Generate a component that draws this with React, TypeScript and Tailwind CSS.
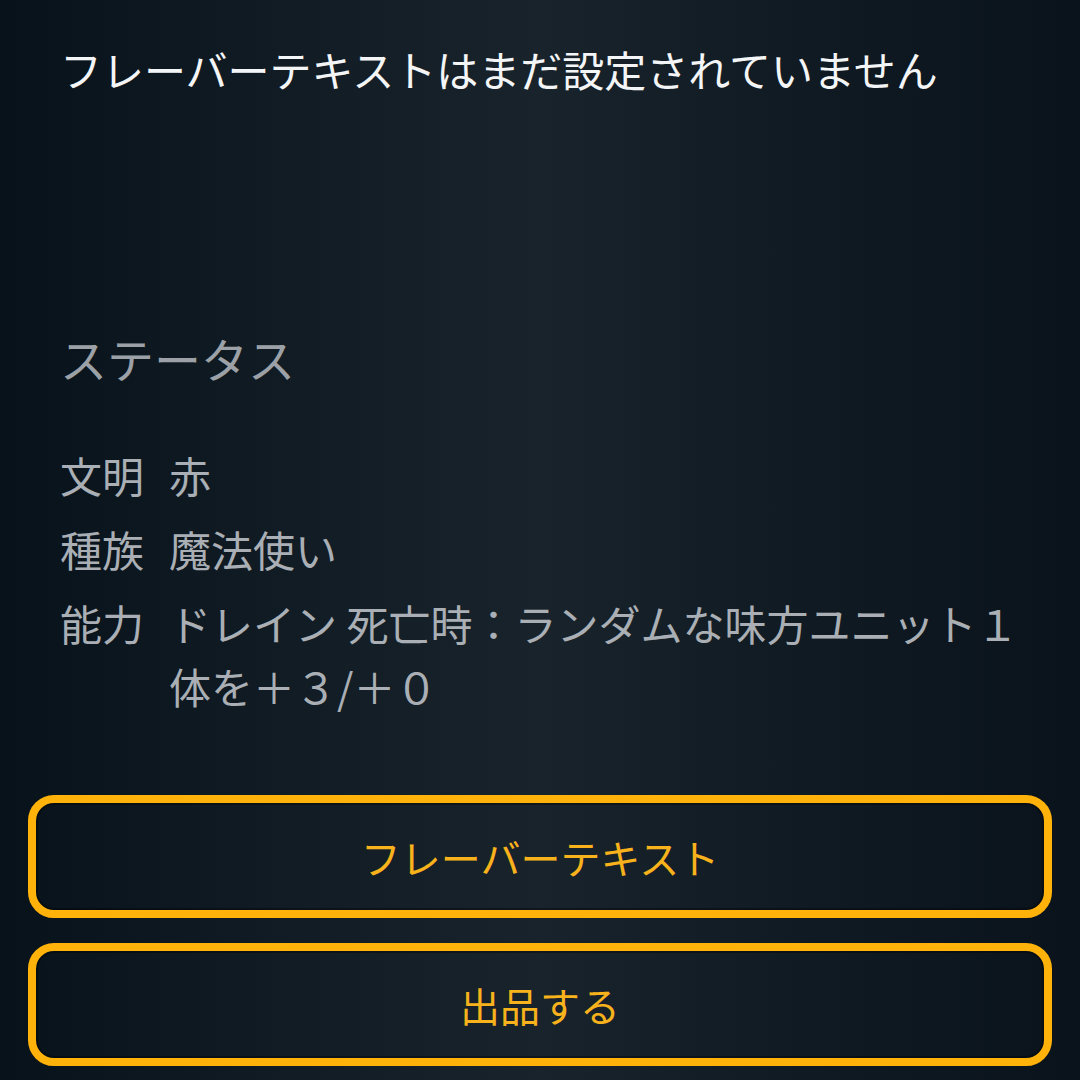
const statusRows = [
  { label: "文明", value: "赤" },
  { label: "種族", value: "魔法使い" },
  { label: "能力", value: "ドレイン 死亡時：ランダムな味方ユニット１体を＋３/＋０" },
];

function OutlineButton({ text }: { text: string }) {
  return (
    <button className="flex h-[123px] w-full items-center justify-center rounded-[26px] border-[8px] border-[#ffb20a] text-[40px] leading-none text-[#f7b21c] shadow-[inset_0_0_0_2px_rgba(0,0,0,0.35)]">
      {text}
    </button>
  );
}

export default function App() {
  return (
    <div
      className="flex h-[1080px] w-[1080px] flex-col overflow-hidden bg-[linear-gradient(90deg,#08121a_0%,#111b24_25%,#19232b_50%,#111b23_72%,#0a131b_100%)]"
      style={{ fontFamily: '"Noto Sans CJK JP", "Noto Sans", sans-serif' }}
    >
      <div className="pl-[60px] pr-[40px]">
        {/* flavor text */}
        <p className="mt-[39px] text-[42px] leading-[60px] text-[#f4f5f6]">
          フレーバーテキストはまだ設定されていません
        </p>

        {/* status */}
        <h2 className="mt-[229px] text-[47px] leading-[60px] text-[#9ba1a6]">ステータス</h2>

        <div className="mt-[55px] flex flex-col gap-[11px]">
          {statusRows.map((row) => (
            <div key={row.label} className="flex text-[42px] leading-[63px] text-[#a9afb4]">
              <span className="w-[109px] shrink-0">{row.label}</span>
              <span className="min-w-0 flex-1">{row.value}</span>
            </div>
          ))}
        </div>
      </div>

      <div className="mt-[78px] flex flex-col gap-[25px] px-[28px]">
        <OutlineButton text="フレーバーテキスト" />
        <OutlineButton text="出品する" />
      </div>
    </div>
  );
}
